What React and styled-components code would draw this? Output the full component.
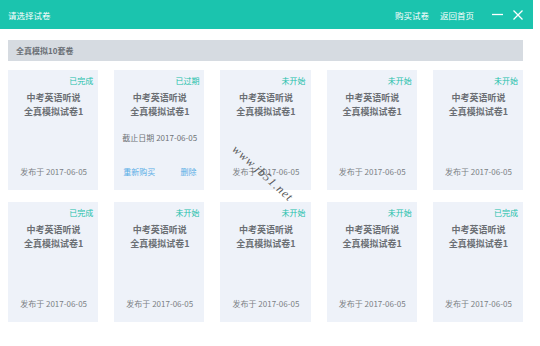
import React from 'react';
import styled, { createGlobalStyle } from 'styled-components';

const GlobalStyle = createGlobalStyle`
  html, body {
    margin: 0;
    padding: 0;
    background: #ffffff;
  }
  body {
    font-family: 'Noto Sans CJK SC', 'Noto Sans', 'Liberation Sans', sans-serif;
  }
`;

const Window = styled.div`
  width: 533px;
  height: 346px;
  background: #ffffff;
  position: relative;
  overflow: hidden;
`;

const Header = styled.div`
  height: 29px;
  background: #1bc4ae;
  display: flex;
  align-items: center;
  padding: 0 10px 0 8px;
  color: #ffffff;
`;

const HeaderTitle = styled.div`
  font-size: 8.5px;
  flex: 1;
`;

const HeaderLink = styled.span`
  font-size: 8.5px;
  margin-left: 11px;
`;

const WinButtons = styled.div`
  display: flex;
  align-items: center;
  gap: 10px;
  margin-left: 18px;
`;

const SectionBar = styled.div`
  margin: 11px 10px 0 8px;
  height: 21px;
  background: #d6dbe1;
  display: flex;
  align-items: center;
  padding-left: 8px;
  font-size: 8px;
  font-weight: 700;
  color: #6a6f75;
`;

const Grid = styled.div`
  margin: 9px 10px 0 8px;
  display: grid;
  grid-template-columns: repeat(5, 1fr);
  column-gap: 16px;
  row-gap: 12px;
`;

const Card = styled.div`
  height: 120px;
  box-sizing: border-box;
  background: #eef2f9;
  padding: 6px 5px 12px 6px;
  display: flex;
  flex-direction: column;
  align-items: center;
`;

const Status = styled.div`
  align-self: flex-end;
  font-size: 8px;
  line-height: 10px;
  color: #22c0aa;
`;

const Title = styled.div`
  margin-top: 5px;
  text-align: center;
  font-size: 9px;
  line-height: 14px;
  font-weight: 700;
  color: #6b6f74;
`;

const Deadline = styled.div`
  margin-top: 13px;
  font-size: 8px;
  line-height: 12px;
  color: #6f7377;
`;

const Footer = styled.div`
  margin-top: auto;
  align-self: stretch;
  display: flex;
  justify-content: ${p => (p.$split ? 'space-between' : 'center')};
  padding: 0 3px;
  font-size: 8px;
  line-height: 12px;
  color: #7b7f84;
`;

const Action = styled.span`
  color: #5aaee6;
`;

const Watermark = styled.div`
  position: absolute;
  left: 224px;
  top: 166px;
  transform: rotate(42deg);
  font-family: 'Liberation Serif', serif;
  font-style: italic;
  font-size: 12px;
  color: #555555;
  letter-spacing: 1px;
  pointer-events: none;
`;

const papers = [
  { status: '已完成' },
  { status: '已过期', expired: true },
  { status: '未开始' },
  { status: '未开始' },
  { status: '未开始' },
  { status: '已完成' },
  { status: '未开始' },
  { status: '未开始' },
  { status: '未开始' },
  { status: '已完成' },
];

const App = () => {
  return (
    <Window>
      <GlobalStyle />
      <Header>
        <HeaderTitle>请选择试卷</HeaderTitle>
        <HeaderLink>购买试卷</HeaderLink>
        <HeaderLink>返回首页</HeaderLink>
        <WinButtons>
          <svg width="11" height="11" viewBox="0 0 11 11">
            <path d="M0 5.5 H11" stroke="#fff" strokeWidth="1.3" />
          </svg>
          <svg width="10" height="10" viewBox="0 0 10 10">
            <path d="M0.5 0.5 L9.5 9.5 M9.5 0.5 L0.5 9.5" stroke="#fff" strokeWidth="1.3" />
          </svg>
        </WinButtons>
      </Header>
      <SectionBar>全真模拟10套卷</SectionBar>
      <Grid>
        {papers.map((p, i) => (
          <Card key={i}>
            <Status>{p.status}</Status>
            <Title>
              中考英语听说
              <br />
              全真模拟试卷1
            </Title>
            {p.expired ? (
              <>
                <Deadline>截止日期 2017-06-05</Deadline>
                <Footer $split>
                  <Action>重新购买</Action>
                  <Action>删除</Action>
                </Footer>
              </>
            ) : (
              <Footer>发布于 2017-06-05</Footer>
            )}
          </Card>
        ))}
      </Grid>
      <Watermark>www.jb51.net</Watermark>
    </Window>
  );
};

export default App;
